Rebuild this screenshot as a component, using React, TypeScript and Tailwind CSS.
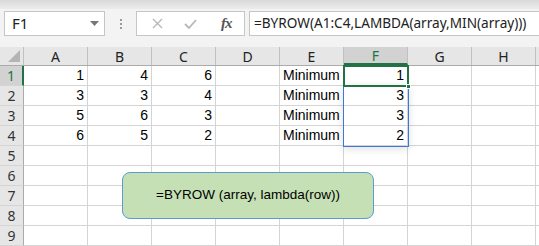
import React from 'react';

const cols = ['A', 'B', 'C', 'D', 'E', 'F', 'G', 'H'];

const data: Record<number, (string | number)[]> = {
    1: [1, 4, 6, '', 'Minimum', 1],
    2: [3, 3, 4, '', 'Minimum', 3],
    3: [5, 6, 3, '', 'Minimum', 3],
    4: [6, 5, 2, '', 'Minimum', 2],
};

const Toolbar: React.FC = () => (
    <div className="bg-[#f3f3f3]">
        <div className="h-[9px] bg-gradient-to-b from-[#d9d9d9] to-[#ececec]" />
        <div className="h-[38px] flex items-start pt-[2px]">
            <div className="shrink-0 ml-[4px] w-[101px] h-[25px] bg-white border border-[#c6c6c6] flex items-center justify-between pl-[7px] pr-[5px]">
                <span className="text-[15px] text-[#222] font-['Noto_Sans',sans-serif]">F1</span>
                <svg width="9" height="5" viewBox="0 0 9 5"><path d="M0 0h9L4.5 5z" fill="#777" /></svg>
            </div>
            <div className="shrink-0 w-[31px] h-[25px] flex flex-col items-center justify-center gap-[2px]">
                <span className="w-[2px] h-[2px] bg-[#9a9a9a]" />
                <span className="w-[2px] h-[2px] bg-[#9a9a9a]" />
                <span className="w-[2px] h-[2px] bg-[#9a9a9a]" />
            </div>
            <div className="shrink-0 w-[109px] h-[25px] bg-white border border-[#c6c6c6] flex items-center">
                <svg className="ml-[15px]" width="11" height="11" viewBox="0 0 11 11"><path d="M1 1l9 9M10 1l-9 9" stroke="#b8b8b8" strokeWidth="1.4" /></svg>
                <svg className="ml-[21px]" width="13" height="10" viewBox="0 0 13 10"><path d="M1 5l4 4 7-8" stroke="#b8b8b8" strokeWidth="1.8" fill="none" /></svg>
                <span className="ml-[24px] text-[15px] italic font-semibold text-[#555] font-['Liberation_Serif',serif] tracking-[-1px]">fx</span>
            </div>
            <div className="ml-[4px] min-w-0 flex-1 h-[25px] bg-white border border-[#c6c6c6] border-r-0 flex items-center pl-[4px] overflow-hidden">
                <span className="text-[13.6px] text-[#222] font-['Noto_Sans',sans-serif] whitespace-nowrap">=BYROW(A1:C4,LAMBDA(array,MIN(array)))</span>
            </div>
        </div>
    </div>
);

const HeaderRow: React.FC = () => (
    <div className="flex h-[19px] bg-[#e6e6e6] border-b border-[#ababab]">
        <div className="relative w-[24px] shrink-0 border-r border-[#c0c0c0]">
            <svg className="absolute right-[3px] bottom-[3px]" width="12" height="12" viewBox="0 0 12 12"><path d="M12 0v12H0z" fill="#b4b4b4" /></svg>
        </div>
        {cols.map((c) => (
            <div
                key={c}
                className={`w-[64px] shrink-0 border-r border-[#c0c0c0] flex items-center justify-center text-[14px] ${c === 'F' ? 'bg-[#d2d2d2] text-[#217346] border-b-2 border-b-[#217346]' : 'text-[#222]'}`}
            >
                {c}
            </div>
        ))}
        <div className="flex-1" />
    </div>
);

const Row: React.FC<{ n: number }> = ({ n }) => {
    const vals = data[n] || [];
    return (
        <div className="flex h-[20px]">
            <div className={`w-[24px] shrink-0 border-b border-[#d4d4d4] flex items-center justify-center text-[14px] font-['Noto_Sans',sans-serif] ${n === 1 ? 'bg-[#d2d2d2] text-[#217346] border-r-2 border-r-[#217346]' : 'bg-[#e6e6e6] text-[#333] border-r border-r-[#ababab]'}`}>
                {n}
            </div>
            {cols.map((c, i) => {
                const v = vals[i] ?? '';
                const isText = typeof v === 'string';
                return (
                    <div
                        key={c}
                        className={`w-[64px] shrink-0 border-r border-b border-[#d4d4d4] flex items-end pb-[1px] px-[3px] text-[14px] leading-[18px] text-black font-['Liberation_Sans',sans-serif] ${isText ? 'justify-start' : 'justify-end'}`}
                    >
                        {v}
                    </div>
                );
            })}
            <div className="flex-1 border-b border-[#d4d4d4]" />
        </div>
    );
};

export default function App() {
    return (
        <div className="relative w-[539px] h-[246px] overflow-hidden bg-white font-['Noto_Sans',sans-serif]">
            <Toolbar />
            <HeaderRow />
            {[1, 2, 3, 4, 5, 6, 7, 8, 9].map((n) => (
                <Row key={n} n={n} />
            ))}

            {/* spill range F1:F4 */}
            <div className="absolute left-[343px] top-[85px] w-[66px] h-[62px] border border-[#3c78d8] shadow-[0_2px_8px_rgba(0,0,0,0.12)]" />
            {/* active cell */}
            <div className="absolute left-[343px] top-[65px] w-[66px] h-[22px] border-2 border-[#217346]" />
            <div className="absolute left-[406px] top-[84px] w-[5px] h-[5px] bg-[#217346] border border-white" />

            {/* callout shape */}
            <div className="absolute left-[122px] top-[172px] w-[252px] h-[47px] rounded-[8px] bg-[#c5e0b4] border border-[#5b9bd5] flex items-center justify-center">
                <span className="text-[13.5px] text-black font-['Liberation_Sans',sans-serif]">=BYROW (array, lambda(row))</span>
            </div>
        </div>
    );
}
